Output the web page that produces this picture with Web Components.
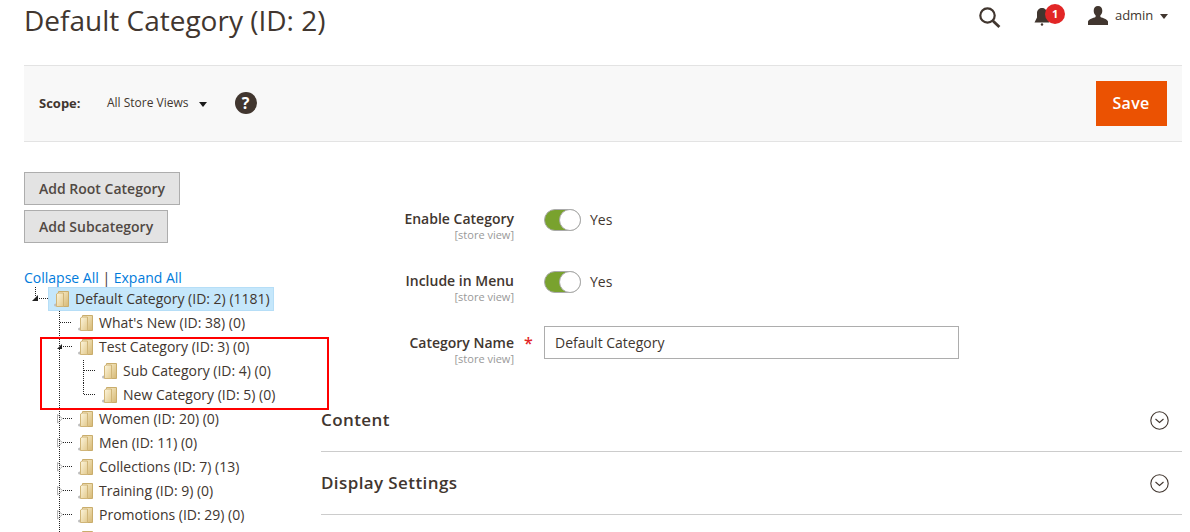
<!DOCTYPE html>
<html lang="en"><head><meta charset="utf-8"><title>Default Category</title>
<style>
html,body{margin:0;padding:0;background:#fff}
body{font-family:"Open Sans",sans-serif;color:#41362f;width:1190px;height:532px;overflow:hidden}
</style></head><body>
<x-page>
  <x-header title-text="Default Category (ID: 2)"></x-header>
  <x-actions></x-actions>
  <x-main>
    <x-tree slot="tree">
      <x-node depth="0" kind="root" selected label="Default Category (ID: 2) (1181)"></x-node>
      <x-node depth="1" kind="leaf" label="What's New (ID: 38) (0)"></x-node>
      <x-node depth="1" kind="open" label="Test Category (ID: 3) (0)"></x-node>
      <x-node depth="2" kind="child" label="Sub Category (ID: 4) (0)"></x-node>
      <x-node depth="2" kind="last" label="New Category (ID: 5) (0)"></x-node>
      <x-node depth="1" kind="closed" label="Women (ID: 20) (0)"></x-node>
      <x-node depth="1" kind="closed" label="Men (ID: 11) (0)"></x-node>
      <x-node depth="1" kind="closed" label="Collections (ID: 7) (13)"></x-node>
      <x-node depth="1" kind="closed" label="Training (ID: 9) (0)"></x-node>
      <x-node depth="1" kind="closed" label="Promotions (ID: 29) (0)"></x-node>
      <x-node depth="1" kind="closed" label=""></x-node>
    </x-tree>
    <x-field slot="form" label="Enable Category"><x-toggle></x-toggle></x-field>
    <x-field slot="form" label="Include in Menu"><x-toggle></x-toggle></x-field>
    <x-field slot="form" label="Category Name" required><x-input value="Default Category"></x-input></x-field>
    <x-section slot="sections" heading="Content"></x-section>
    <x-section slot="sections" heading="Display Settings"></x-section>
  </x-main>
  <x-annot></x-annot>
</x-page>
<script>
const def=(name,html,init)=>customElements.define(name,class extends HTMLElement{
  constructor(){super();this.attachShadow({mode:"open"});}
  connectedCallback(){this.shadowRoot.innerHTML=typeof html==="function"?html(this):html;if(init)init(this);}
});
const attr=(s)=>String(s||"").replace(/&/g,"&amp;").replace(/</g,"&lt;");

def("x-page",`<style>:host{display:block;position:relative;width:1190px;height:532px;overflow:hidden}</style><slot></slot>`);

def("x-header",el=>`<style>
:host{display:flex;box-sizing:border-box;height:65px;padding:0 22px 0 24px;justify-content:space-between;align-items:flex-start}
h1{margin:0;font:400 28px/40px "Open Sans",sans-serif;color:#41362f}
.tools{display:flex;align-items:flex-start}
.s{margin:7px 0 0 0;display:block}
.bell{position:relative;width:32px;height:30px;margin:5px 0 0 33px}
.bell svg{position:absolute;left:0;top:0}
.badge{position:absolute;left:11px;top:-1px;width:20px;height:20px;border-radius:50%;background:#e22626;color:#fff;font:700 11px/20px "Open Sans",sans-serif;text-align:center}
.u{margin:6px 0 0 22px;display:block}
.n{font:400 13px/20px "Open Sans",sans-serif;color:#41362f;margin:5px 0 0 7px;letter-spacing:-.1px}
.c{width:0;height:0;border:4px solid transparent;border-top:5px solid #41362f;border-bottom:0;margin:14px 0 0 7px}
</style>
<h1>${attr(el.getAttribute("title-text"))}</h1>
<div class="tools">
<svg class="s" width="22" height="21" viewBox="0 0 22 21"><circle cx="8.5" cy="8.5" r="7.2" fill="none" stroke="#41362f" stroke-width="2.2"/><path d="M13.8 13.8l6.6 6.2" stroke="#41362f" stroke-width="2.8" fill="none"/></svg>
<div class="bell"><svg width="18" height="22" viewBox="0 0 18 22"><path d="M8 3c-3.400 0-5 2.600-5 5.400V12.500L.5 17.500H15.500L13 12.500V8.400C13 5.600 11.400 3 8 3z" fill="#41362f"/><circle cx="8" cy="19.500" r="1.200" fill="#41362f"/></svg><div class="badge">1</div></div>
<svg class="u" width="20" height="19" viewBox="0 0 20 19"><path d="M10 0c-2.700 0-4.300 2-4.300 4.700 0 2 .8 3.500 1.900 4.600v1.700C5.300 12 .6 13.200 0 15.500V19h20v-3.500c-.6-2.300-5.300-3.500-7.600-4.500V9.300c1.100-1.100 1.900-2.600 1.900-4.600C14.300 2 12.700 0 10 0z" fill="#41362f"/></svg>
<div class="n">admin</div><div class="c"></div>
</div>`);

def("x-actions",`<style>
:host{display:flex;box-sizing:border-box;height:77px;margin:0 8px 0 24px;background:#f8f8f8;border-top:1px solid #e3e3e3;border-bottom:1px solid #e3e3e3;align-items:center;padding:0 15px}
.l{font:700 13px/18px "Open Sans",sans-serif;color:#41362f;width:68px;margin-top:-2px}
.v{font:400 12px/18px "Open Sans",sans-serif;color:#41362f;margin-top:-2px}
.c{width:0;height:0;border:4px solid transparent;border-top:5px solid #1a1a1a;border-bottom:0;margin:2px 0 0 10px}
.h{width:22px;height:22px;border-radius:50%;background:#41362f;color:#fff;font:700 16px/22px "Open Sans",sans-serif;text-align:center;margin:-1px 0 0 28px}
.save{margin-left:auto;box-sizing:border-box;width:71px;height:45px;background:#eb5202;color:#fff;font:600 16px/45px "Open Sans",sans-serif;text-align:center;padding-right:1px;letter-spacing:.3px}
</style><span class="l">Scope:</span><span class="v">All Store Views</span><span class="c"></span><span class="h">?</span><span class="save">Save</span>`);

def("x-main",`<style>
:host{display:flex;padding:30px 0 0 24px}
.left{width:297px;flex:none}
.btn{display:table;box-sizing:border-box;height:33px;padding:0 14px;background:#e3e3e3;border:1px solid #adadad;color:#514943;font:600 14px/31px "Open Sans",sans-serif;margin-bottom:5px}
.links{margin-top:25px;font:400 14px/20px "Open Sans",sans-serif;color:#41362f}
.links a{color:#007bdb;text-decoration:none}
.right{flex:1;min-width:0;margin-right:8px}
.form{padding-top:37px;height:217px;box-sizing:border-box}
</style>
<div class="left"><div class="btn">Add Root Category</div><div class="btn">Add Subcategory</div>
<div class="links"><a>Collapse All</a> | <a>Expand All</a></div><slot name="tree"></slot></div>
<div class="right"><div class="form"><slot name="form"></slot></div><slot name="sections"></slot></div>`);

def("x-tree",`<style>:host{display:block;margin-top:-1px}</style><slot></slot>`);

const dotH=(x1,x2,y)=>`<path d="M${x1} ${y+.5}H${x2}" stroke="#222" stroke-dasharray="1 1" fill="none"/>`;
const dotV=(x,y1,y2)=>`<path d="M${x+.5} ${y1}V${y2}" stroke="#222" stroke-dasharray="1 1" fill="none"/>`;
let uid=0;
def("x-node",el=>{
  const d=+el.getAttribute("depth"),k=el.getAttribute("kind"),sel=el.hasAttribute("selected"),w=24+24*d,label=el.getAttribute("label");
  const id="g"+(++uid);
  let s="";
  if(k==="root"){s=dotV(11,0,9)+dotH(15,24,11)+`<path d="M8 14L14 8V14Z" fill="#222"/>`;}
  else if(d===1){
    if(k==="closed")s+=`<path d="M33.500 7.500L38.500 11.500L33.500 16Z" fill="#fff" stroke="#b5b5b5"/>`+dotH(39,48,11);
    s+=dotV(35,0,24);
    if(k==="leaf")s+=dotH(36,48,11);
    if(k==="open")s+=`<path d="M33 14L38 9V14Z" fill="#222"/>`+dotH(39,48,11);
  } else {
    s=dotV(35,0,24)+dotV(59,k==="child"?-1:0,k==="child"?24:12)+dotH(60,72,11);
  }
  return `<style>
  :host{display:flex;height:24px;align-items:center}
  svg{display:block;flex:none}
  .lab{display:flex;align-items:center;box-sizing:border-box;height:24px;padding:0 4px 0 6px;font:400 14px/24px "Open Sans",sans-serif;color:#41362f;white-space:nowrap;${sel?"background:#c5e7fb;border:1px solid #b6def7;padding:0 3px 0 5px;":""}}
  .t{margin-left:6px}
  </style>
  <svg width="${w}" height="24" viewBox="0 0 ${w} 24">${s}</svg>
  <div class="lab"><svg width="15" height="16" viewBox="0 0 15 16"><defs><linearGradient id="${id}" x1="0" y1="0" x2="1" y2="1"><stop offset="0" stop-color="#faf0cf"/><stop offset="1" stop-color="#d6b874"/></linearGradient><linearGradient id="${id}f" x1="0" y1="0" x2="1" y2="1"><stop offset="0" stop-color="#fdf6de"/><stop offset="1" stop-color="#e2c98c"/></linearGradient></defs>
  <ellipse cx="1.800" cy="14" rx="1.800" ry="1.600" fill="#bdbdbd"/><path d="M4.500 .5H14.500V15.500H4.500Z" fill="url(#${id})" stroke="#c9ad6c"/><path d="M2.500 3L4 2H9.500V15.500H2.500Z" fill="url(#${id}f)" stroke="#d0b578"/></svg>${label?`<span class="t">${attr(label)}</span>`:""}</div>`;
});

def("x-field",el=>`<style>
:host{display:flex;height:62px;align-items:flex-start}
.lab{width:193px;text-align:right;flex:none}
.m{font:600 14px/20px "Open Sans",sans-serif;color:#41362f;display:block}
.sv{font:400 11px/12px "Open Sans",sans-serif;color:#999;display:block;margin-top:0}
.star{width:30px;flex:none;color:#e22626;font:600 16px/20px "Open Sans",sans-serif;text-align:left;padding-left:10px;box-sizing:border-box;height:20px}
</style><div class="lab"><span class="m">${attr(el.getAttribute("label"))}</span><span class="sv">[store view]</span></div><div class="star">${el.hasAttribute("required")?"*":""}</div><slot></slot>`);

def("x-toggle",`<style>
:host{display:flex;align-items:center;height:22px}
.tr{box-sizing:border-box;width:37px;height:22px;border-radius:11px;background:#79a22e;border:1px solid #aaa;position:relative}
.kn{position:absolute;right:-1px;top:-1px;width:22px;height:22px;box-sizing:border-box;border-radius:50%;background:#fff;border:1px solid #aaa}
.y{font:400 14px/20px "Open Sans",sans-serif;color:#41362f;margin-left:9px}
</style><div class="tr"><div class="kn"></div></div><span class="y">Yes</span>`);

def("x-input",el=>`<style>
:host{display:block;box-sizing:border-box;width:415px;height:33px;border:1px solid #adadad;padding:0 10px;font:400 14px/31px "Open Sans",sans-serif;color:#41362f;margin-top:-7px}
</style>${attr(el.getAttribute("value"))}`);

def("x-section",el=>`<style>
:host{display:flex;box-sizing:border-box;height:63px;align-items:center;justify-content:space-between;border-bottom:1px solid #ccc;padding-right:13px}
.h{font:600 17px/24px "Open Sans",sans-serif;color:#41362f;letter-spacing:.4px}
</style><span class="h">${attr(el.getAttribute("heading"))}</span>
<svg width="19" height="19" viewBox="0 0 19 19"><circle cx="9.500" cy="9.500" r="8.700" fill="none" stroke="#41362f" stroke-width="1.100"/><path d="M5.500 8l4 3.500 4-3.500" fill="none" stroke="#41362f" stroke-width="1.100"/></svg>`);

def("x-annot",`<style>:host{position:absolute;left:40px;top:337px;width:289px;height:73px;box-sizing:border-box;border:2px solid #f00;pointer-events:none}</style>`);
</script>
</body></html>
